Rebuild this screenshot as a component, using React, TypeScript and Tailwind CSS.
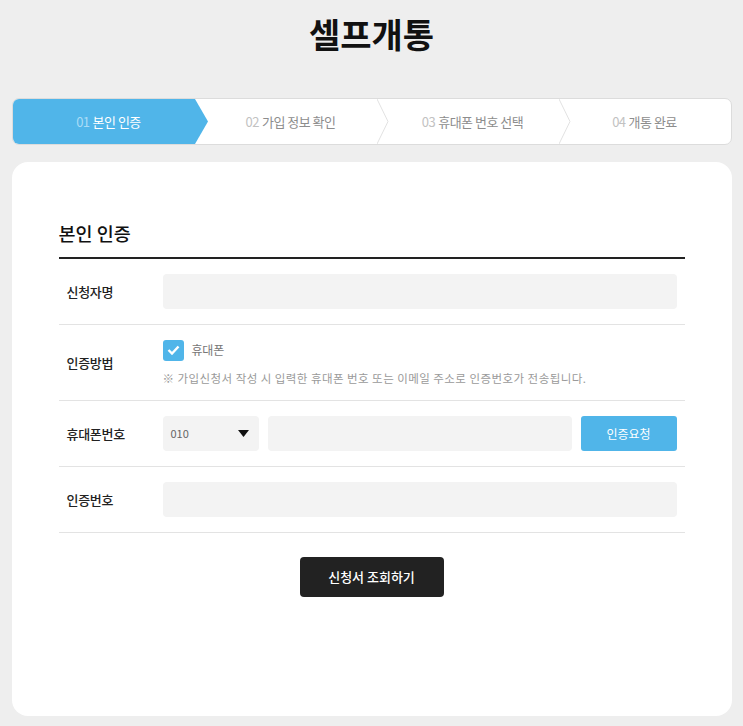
import React from "react";

const steps = [
  { no: "01", label: "본인 인증" },
  { no: "02", label: "가입 정보 확인" },
  { no: "03", label: "휴대폰 번호 선택" },
  { no: "04", label: "개통 완료" },
];

const font = { fontFamily: '"Noto Sans CJK KR", "Noto Sans", sans-serif' };

function Stepper() {
  return (
    <div className="mx-auto mt-[44px] flex h-[47px] w-[720px] rounded-[7px] border border-[#dcdcdc] bg-white">
      {steps.map((s, i) => {
        const active = i === 0;
        return (
          <div
            key={s.no}
            className={`relative flex flex-1 items-center justify-center text-[13px] tracking-[-0.5px] ${
              i < 3 ? "pl-[10px]" : ""
            } ${active ? "rounded-l-[6px] bg-[#50b5e9]" : ""}`}
          >
            <span className={active ? "text-[#a9dcf6]" : "text-[#c2c2c2]"}>{s.no}</span>
            <span className={`ml-[3px] ${active ? "text-white" : "text-[#8d8d8d]"}`}>{s.label}</span>
            {active && (
              <svg className="absolute left-full top-0 z-10" width="13" height="45" viewBox="0 0 13 45">
                <polygon points="0,0 13,22.5 0,45" fill="#50b5e9" />
              </svg>
            )}
            {(i === 1 || i === 2) && (
              <svg className="absolute left-full top-0 z-10" width="12" height="45" viewBox="0 0 12 45">
                <polyline points="0,0 11,22.5 0,45" fill="none" stroke="#e2e2e2" strokeWidth="1" />
              </svg>
            )}
          </div>
        );
      })}
    </div>
  );
}

function Row({ label, tall, children }: { label: string; tall?: boolean; children: React.ReactNode }) {
  return (
    <div className={`flex items-center border-b border-[#e3e3e3] ${tall ? "h-[76px]" : "h-[66px]"}`}>
      <div className="w-[104px] pl-[8px] text-[13px] font-medium tracking-[-0.3px] text-[#222]">{label}</div>
      <div className="flex-1 pr-[8px]">{children}</div>
    </div>
  );
}

export default function App() {
  return (
    <div className="min-h-screen bg-[#eeeeee] pb-[10px]" style={font}>
      <h1 className="pt-[14px] text-center text-[34px] font-bold leading-[40px] text-[#111]">셀프개통</h1>

      <Stepper />

      <div className="mx-auto mt-[17px] w-[720px] rounded-[16px] bg-white px-[47px] pb-[119px] pt-[58px]">
        <h2 className="border-b-2 border-[#222] pb-[11px] text-[18.5px] font-medium leading-[26px] text-[#111]">
          본인 인증
        </h2>

        <Row label="신청자명">
          <div className="h-[35px] rounded-[4px] bg-[#f3f3f3]" />
        </Row>

        <Row label="인증방법" tall>
          <div className="flex flex-col">
            <div className="flex h-[22px] items-center">
              <span className="flex h-[21px] w-[21px] items-center justify-center rounded-[3px] bg-[#50b5e9]">
                <svg width="13" height="10" viewBox="0 0 13 10">
                  <polyline points="1.5,5 5,8.5 11.5,1.5" fill="none" stroke="#fff" strokeWidth="2.4" />
                </svg>
              </span>
              <span className="ml-[8px] text-[12px] tracking-[-0.2px] text-[#777]">휴대폰</span>
            </div>
            <p className="mt-[9px] text-[11.5px] leading-[16px] tracking-[0.45px] text-[#9a9a9a]">
              ※ 가입신청서 작성 시 입력한 휴대폰 번호 또는 이메일 주소로 인증번호가 전송됩니다.
            </p>
          </div>
        </Row>

        <Row label="휴대폰번호">
          <div className="flex gap-[9px]">
            <div className="flex h-[35px] w-[96px] items-center justify-between rounded-[4px] bg-[#f3f3f3] pl-[8px] pr-[10px]">
              <span className="text-[11px] text-[#666]">010</span>
              <svg width="11" height="7" viewBox="0 0 11 7">
                <polygon points="0,0 11,0 5.5,7" fill="#111" />
              </svg>
            </div>
            <div className="h-[35px] flex-1 rounded-[4px] bg-[#f3f3f3]" />
            <button className="h-[35px] w-[96px] rounded-[3px] bg-[#50b5e9] text-[12px] text-white">인증요청</button>
          </div>
        </Row>

        <Row label="인증번호">
          <div className="h-[35px] rounded-[4px] bg-[#f3f3f3]" />
        </Row>

        <div className="flex justify-center pt-[24px]">
          <button className="h-[40px] w-[144px] rounded-[4px] bg-[#222] text-[13px] font-medium text-white">
            신청서 조회하기
          </button>
        </div>
      </div>
    </div>
  );
}
